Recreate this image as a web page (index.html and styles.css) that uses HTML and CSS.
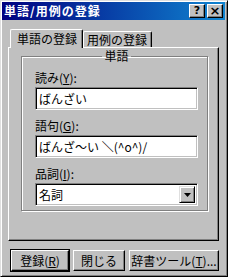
FILE: index.html
```html
<!DOCTYPE html>
<html lang="ja">
<head>
<meta charset="utf-8">
<link rel="stylesheet" href="styles.css">
</head>
<body>
<div class="window">
  <div class="titlebar">
    <span class="title">単語/用例の登録</span>
    <div class="tbtns">
      <span class="tbtn">?</span>
      <span class="tbtn x">×</span>
    </div>
  </div>
  <div class="tabs">
    <div class="tab active">単語の登録</div>
    <div class="tab">用例の登録</div>
  </div>
  <div class="panel">
    <fieldset class="group">
      <legend>単語</legend>
      <label class="lbl">読み(<u>Y</u>):</label>
      <div class="field">ばんざい</div>
      <label class="lbl">語句(<u>G</u>):</label>
      <div class="field">ばんざ〜い ＼(^o^)/</div>
      <label class="lbl">品詞(<u>I</u>):</label>
      <div class="field select"><span>名詞</span><span class="drop"><svg width="7" height="4" viewBox="0 0 7 4"><path d="M0 0h7L3.5 4z" fill="#000"/></svg></span></div>
    </fieldset>
  </div>
  <div class="buttons">
    <div class="btn default"><span>登録(<u>R</u>)</span></div>
    <div class="btn w2"><span>閉じる</span></div>
    <div class="btn w3"><span>辞書ツール(<u>T</u>)...</span></div>
  </div>
</div>
</body>
</html>
```
FILE: styles.css
```css
* { box-sizing: border-box; }
html, body { margin: 0; padding: 0; }
body { width: 228px; height: 277px; overflow: hidden; font-family: "Noto Sans CJK JP", "DejaVu Sans", sans-serif; font-size: 12px; color: #000; }
.window {
  width: 228px; height: 277px; background: #c0c0c0;
  border-top: 1px solid #dfdfdf; border-left: 1px solid #dfdfdf;
  border-right: 1px solid #000; border-bottom: 1px solid #000;
  box-shadow: inset 1px 1px 0 #fff, inset -1px -1px 0 #808080;
  padding: 1px 2px 2px 1px;
  display: flex; flex-direction: column;
}
.titlebar {
  height: 18px; background: linear-gradient(to right, #000080, #1084d0);
  display: flex; align-items: center; justify-content: space-between;
  padding: 0 2px 0 2px;
}
.title { color: #fff; font-weight: bold; font-size: 12px; line-height: 14px; letter-spacing: 1px; }
.tbtns { display: flex; gap: 2px; }
.tbtn {
  width: 16px; height: 14px; background: #c0c0c0;
  border-top: 1px solid #fff; border-left: 1px solid #fff;
  border-right: 1px solid #000; border-bottom: 1px solid #000;
  box-shadow: inset -1px -1px 0 #808080;
  font-family: "DejaVu Sans", sans-serif; font-weight: bold; font-size: 11px; line-height: 12px; text-align: center;
}
.tbtn.x { font-size: 13px; }
.tabs { display: flex; align-items: flex-end; margin: 8px 0 0 10px; height: 19px; position: relative; z-index: 1; }
.tab {
  background: #c0c0c0; border-top: 1px solid #fff; border-left: 1px solid #fff;
  border-right: 1px solid #000; box-shadow: inset -1px 0 0 #808080;
  border-radius: 2px 2px 0 0; padding: 0 4px 0 3px; height: 16px; line-height: 15px; font-size: 12px;
}
.tab.active { height: 19px; line-height: 18px; margin-left: -2px; padding: 0 5px 0 6px; margin-bottom: -1px; }
.panel {
  margin: 0 6px 0 6px; height: 194px;
  border-top: 1px solid #fff; border-left: 1px solid #fff;
  border-right: 1px solid #000; border-bottom: 1px solid #000;
  box-shadow: inset -1px -1px 0 #808080;
  padding: 2px 10px 0 12px;
}
.group {
  margin: 0; padding: 9px 9px 0 13px; height: 161px;
  border: 1px solid #808080; box-shadow: 1px 1px 0 #fff, inset 1px 1px 0 #fff;
  display: flex; flex-direction: column;
}
.group legend { margin: 0 auto; padding: 0 2px; font-size: 12px; line-height: 12px; }
.lbl { display: block; height: 14px; line-height: 14px; margin: 0 0 2px; flex: none; }
.lbl u { text-decoration: underline; }
.field {
  flex: none;
  height: 23px; margin-bottom: 9px; background: #fff;
  border-top: 1px solid #808080; border-left: 1px solid #808080;
  border-right: 1px solid #fff; border-bottom: 1px solid #fff;
  box-shadow: inset 1px 1px 0 #000, inset -1px -1px 0 #c0c0c0;
  padding: 1px 3px; line-height: 19px; font-size: 12px;
}
.select { display: flex; justify-content: space-between; padding-right: 2px; }
.drop {
  width: 16px; height: 17px; margin-top: 1px; background: #c0c0c0;
  border-top: 1px solid #dfdfdf; border-left: 1px solid #dfdfdf;
  border-right: 1px solid #000; border-bottom: 1px solid #000;
  box-shadow: inset 1px 1px 0 #fff, inset -1px -1px 0 #808080;
  display: flex; align-items: center; justify-content: center;
}
.buttons { display: flex; gap: 4px; margin: 9px 0 0 9px; }
.btn {
  height: 21px; width: 58px; background: #c0c0c0;
  border-top: 1px solid #fff; border-left: 1px solid #fff;
  border-right: 1px solid #000; border-bottom: 1px solid #000;
  box-shadow: inset -1px -1px 0 #808080;
  display: flex; align-items: center; justify-content: center; line-height: 14px;
}
.btn.default { outline: 1px solid #000; }
.btn.w2 { width: 52px; }
.btn.w3 { width: 90px; }
```
